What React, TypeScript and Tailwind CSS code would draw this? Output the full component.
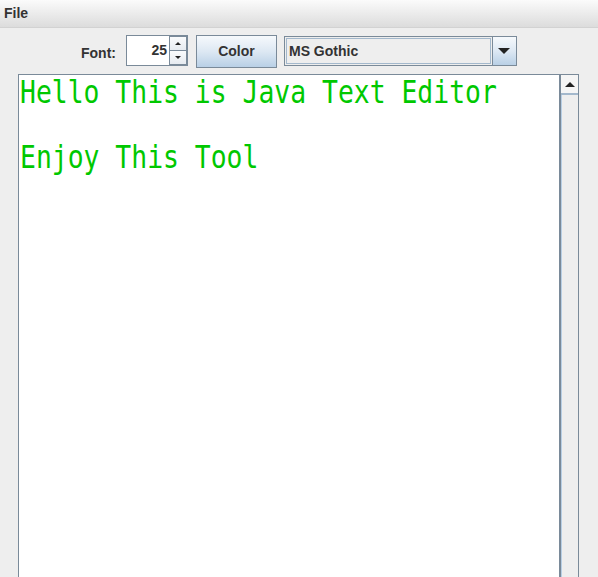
import { useState } from "react";

const ui = { fontFamily: '"Liberation Sans", Arial, sans-serif' };
const mono = { fontFamily: '"DejaVu Sans Mono", "Liberation Mono", monospace' };

function Triangle({ up, size = 5 }: { up?: boolean; size?: number }) {
  const w = size * 2;
  return (
    <svg width={w} height={size} viewBox={`0 0 ${w} ${size}`}>
      {up ? (
        <polygon points={`0,${size} ${w},${size} ${size},0`} fill="#222" />
      ) : (
        <polygon points={`0,0 ${w},0 ${size},${size}`} fill="#222" />
      )}
    </svg>
  );
}

function Spinner({ value }: { value: number }) {
  return (
    <div className="flex h-[31px] border border-[#7a8a99] bg-white">
      <div className="flex w-[42px] items-center justify-end pr-[2px] text-[14px] font-bold text-[#333]">
        {value}
      </div>
      <div className="flex w-[18px] flex-col">
        <div className="flex h-[15px] items-center justify-center border border-[#7a8a99] bg-gradient-to-b from-[#fafbfc] to-[#e6ebf0]">
          <Triangle up size={3} />
        </div>
        <div className="mt-[-1px] flex h-[15px] items-center justify-center border border-[#7a8a99] bg-gradient-to-b from-[#fafbfc] to-[#e6ebf0]">
          <Triangle size={3} />
        </div>
      </div>
    </div>
  );
}

export default function App() {
  const [size] = useState(25);

  return (
    <div className="flex h-[577px] w-[598px] flex-col overflow-hidden bg-[#eeeeee]" style={ui}>
      <div className="flex h-[28px] shrink-0 items-center border-b border-[#d2d2d2] bg-gradient-to-b from-[#fbfbfb] to-[#dcdcdc] pl-[4px]">
        <span className="text-[14px] font-bold text-[#333]">File</span>
      </div>

      <div className="flex h-[46px] shrink-0 items-start justify-center pt-[7px]">
        <span className="mr-[10px] mt-[8px] text-[14px] font-bold text-[#333]">Font:</span>
        <Spinner value={size} />
        <button className="ml-[8px] h-[33px] w-[81px] border border-[#7a8a99] bg-gradient-to-b from-[#f6f9fc] via-[#dde8f3] to-[#b9d0e6] text-[14px] font-bold text-[#333]">
          Color
        </button>
        <div className="ml-[7px] mt-[1px] flex h-[30px] w-[233px] border border-[#7a8a99] bg-[#eeeeee]">
          <div className="m-[1px] flex flex-1 items-center border border-[#a3b8cc] pl-[2px] text-[14px] font-bold text-[#333]">
            MS Gothic
          </div>
          <div className="flex w-[24px] items-center justify-center border-l border-[#7a8a99] bg-gradient-to-b from-[#f6f9fc] via-[#dde8f3] to-[#b9d0e6]">
            <Triangle size={6} />
          </div>
        </div>
      </div>

      <div className="ml-[18px] flex h-[520px] w-[561px] shrink-0 border border-[#7a8a99] bg-white">
        <div className="flex-1 overflow-hidden pl-[1px] pt-[1px] text-[#00c800]" style={mono}>
          <div className="origin-left scale-x-[0.825] whitespace-pre text-[32px] leading-[32.5px]">
            {"Hello This is Java Text Editor\n\nEnjoy This Tool"}
          </div>
        </div>
        <div className="flex w-[19px] flex-col border-l-2 border-l-[#7a8a99] bg-[#eeeeee]">
          <div className="flex h-[20px] items-center justify-center border-b-2 border-b-[#a3b8cc] bg-[#f5f5f5]">
            <Triangle up size={5} />
          </div>
          <div className="flex-1 border-l border-[#b8cfe5]" />
        </div>
      </div>
    </div>
  );
}
